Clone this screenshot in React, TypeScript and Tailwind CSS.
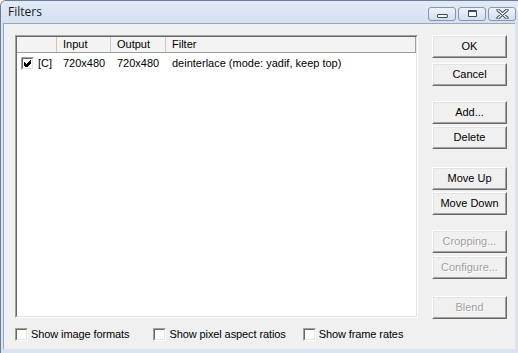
import type { ReactNode } from "react";

const FONT = "font-['Liberation_Sans',Arial,sans-serif]";

type BtnProps = { label: string; disabled?: boolean; className?: string };

// classic raised push button
function PushButton({ label, disabled, className = "" }: BtnProps) {
  return (
    <div
      className={`w-[75px] h-[23px] border border-t-white border-l-white border-b-[#696969] border-r-[#696969] ${className}`}
    >
      <div className="w-full h-full border border-t-[#e3e3e3] border-l-[#e3e3e3] border-b-[#a0a0a0] border-r-[#a0a0a0] bg-[#f0f0f0] flex items-center justify-center">
        <span
          className={`text-[11px] leading-none ${
            disabled ? "text-[#a0a0a0] [text-shadow:1px_1px_0_#ffffff]" : "text-black"
          }`}
        >
          {label}
        </span>
      </div>
    </div>
  );
}

function CheckBox({ checked = false }: { checked?: boolean }) {
  return (
    <span className="inline-flex w-[13px] h-[13px] border border-t-[#a0a0a0] border-l-[#a0a0a0] border-b-white border-r-white shrink-0">
      <span className="flex-1 border border-t-[#696969] border-l-[#696969] border-b-[#e3e3e3] border-r-[#e3e3e3] bg-white flex items-center justify-center">
        {checked && (
          <svg width="7" height="7" viewBox="0 0 7 7">
            <path d="M0 2.5 L2.5 5 L7 0.5 M0 3.5 L2.5 6 L7 1.5 M0 4.5 L2.5 7 L7 2.5" stroke="#000" strokeWidth="1" fill="none" shapeRendering="crispEdges" />
          </svg>
        )}
      </span>
    </span>
  );
}

function CaptionButton({ children }: { children: ReactNode }) {
  return (
    <div className="w-[28px] h-[14px] rounded-[3px] border border-[#8596ad] bg-gradient-to-b from-[#eef3fa] to-[#d2deed] flex items-center justify-center">
      {children}
    </div>
  );
}

function Option({ label }: { label: string }) {
  return (
    <div className="flex items-center gap-[3px]">
      <CheckBox />
      <span className="text-[11px] text-black tracking-[-0.1px]">{label}</span>
    </div>
  );
}

export default function App() {
  return (
    <div className={`w-[518px] h-[353px] ${FONT} bg-[#d8e4f2] border-l border-t border-[#6d7e94] rounded-tl-[6px] flex flex-col overflow-hidden`}>
      {/* title bar */}
      <div className="h-[22px] shrink-0 flex items-center justify-between pl-[7px] pr-[2px] bg-gradient-to-b from-[#e1eaf6] to-[#d5e1f1]">
        <span className="text-[12px] text-[#1b1b1b] font-['Open_Sans',sans-serif]">Filters</span>
        <div className="flex gap-[2px] mt-[3px]">
          <CaptionButton>
            <span className="block w-[11px] h-[4px] border border-[#3c4a5e] bg-white mt-[4px] rounded-[1px]" />
          </CaptionButton>
          <CaptionButton>
            <span className="block w-[9px] h-[7px] border border-[#3c4a5e] border-t-2 bg-white rounded-[1px]" />
          </CaptionButton>
          <CaptionButton>
            <svg width="13" height="10" viewBox="0 0 13 10">
              <path d="M2 1 L11 9 M11 1 L2 9" stroke="#3c4a5e" strokeWidth="3.2" strokeLinecap="round" />
              <path d="M2 1 L11 9 M11 1 L2 9" stroke="#ffffff" strokeWidth="1.2" strokeLinecap="round" />
            </svg>
          </CaptionButton>
        </div>
      </div>

      {/* client area */}
      <div className="flex-1 ml-[2px] mr-[3px] mb-[4px] border-l border-t border-[#97a8bd] bg-[#f0f0f0] flex flex-col pl-[11px] pr-[7px] pt-[11px]">
        <div className="flex gap-[14px]">
          {/* list view */}
          <div className="w-[403px] h-[283px] border border-t-[#a0a0a0] border-l-[#a0a0a0] border-b-white border-r-white">
            <div className="w-full h-full border border-t-[#696969] border-l-[#696969] border-b-[#e3e3e3] border-r-[#e3e3e3] bg-white flex flex-col">
              <div className="flex h-[16px] bg-[#f3f3f3] border-b border-[#a0a0a0] text-[11px] text-black">
                <div className="w-[40px] border-r border-[#c8c8c8]" />
                <div className="w-[54px] border-r border-[#c8c8c8] pl-[6px] flex items-center">Input</div>
                <div className="w-[55px] border-r border-[#c8c8c8] pl-[6px] flex items-center">Output</div>
                <div className="flex-1 border-r border-[#a0a0a0] pl-[6px] flex items-center">Filter</div>
              </div>
              <div className="flex items-center h-[17px] mt-[2px] text-[11px] text-black">
                <div className="w-[40px] flex items-center pl-[4px] gap-[4px]">
                  <CheckBox checked />
                  <span>[C]</span>
                </div>
                <div className="w-[54px] pl-[6px]">720x480</div>
                <div className="w-[55px] pl-[6px]">720x480</div>
                <div className="flex-1 pl-[6px]">deinterlace (mode: yadif, keep top)</div>
              </div>
            </div>
          </div>

          {/* button column */}
          <div className="flex flex-col">
            <PushButton label="OK" />
            <PushButton label="Cancel" className="mt-[5px]" />
            <PushButton label="Add..." className="mt-[15px]" />
            <PushButton label="Delete" className="mt-[2px]" />
            <PushButton label="Move Up" className="mt-[18px]" />
            <PushButton label="Move Down" className="mt-[2px]" />
            <PushButton label="Cropping..." disabled className="mt-[15px]" />
            <PushButton label="Configure..." disabled className="mt-[3px]" />
            <PushButton label="Blend" disabled className="mt-[17px]" />
          </div>
        </div>

        <div className="flex items-center mt-[7px]">
          <Option label="Show image formats" />
          <div className="ml-[24px]">
            <Option label="Show pixel aspect ratios" />
          </div>
          <div className="ml-[17px]">
            <Option label="Show frame rates" />
          </div>
        </div>
      </div>
    </div>
  );
}
